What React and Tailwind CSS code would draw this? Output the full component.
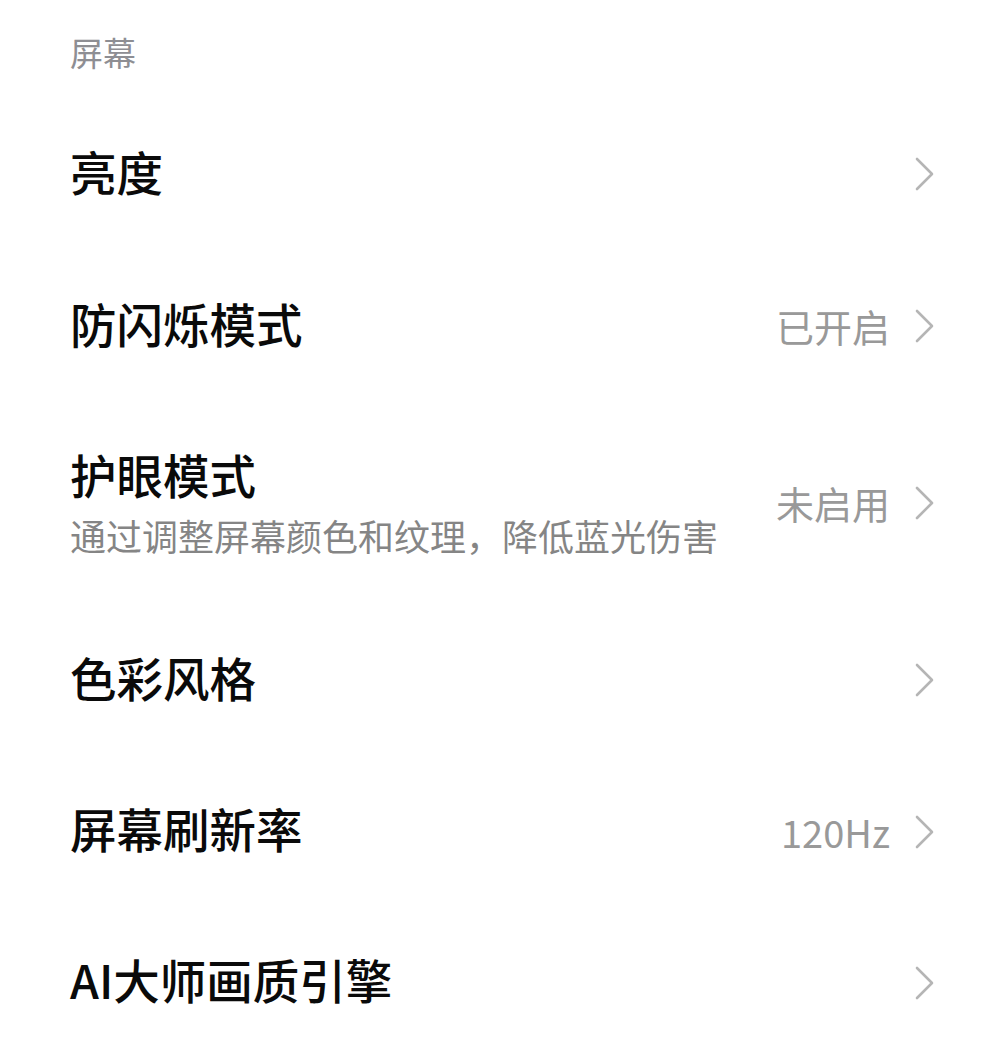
import React from "react";

const Chevron = () => (
  <svg width="20" height="34" viewBox="0 0 20 34" fill="none" className="shrink-0">
    <polyline points="2,2 17,17 2,32" stroke="#b5b5b5" strokeWidth="2.6" strokeLinecap="round" strokeLinejoin="round" />
  </svg>
);

const rows = [
  { title: "亮度", h: "h-[152px]" },
  { title: "防闪烁模式", value: "已开启", h: "h-[152px]" },
  { title: "护眼模式", sub: "通过调整屏幕颜色和纹理，降低蓝光伤害", value: "未启用", h: "h-[202px]" },
  { title: "色彩风格", h: "h-[152px]" },
  { title: "屏幕刷新率", value: "120Hz", h: "h-[151px]" },
  { title: "AI大师画质引擎", h: "h-[151px]" },
];

export default function App() {
  return (
    <div
      className="w-[1004px] h-[1049px] bg-white overflow-hidden"
      style={{ fontFamily: '"Noto Sans CJK SC", "Noto Sans", sans-serif' }}
    >
      <div className="h-[98px] flex items-center pl-[70px] pt-[6px]">
        <span className="text-[33px] leading-none text-[#8e8e93]">屏幕</span>
      </div>
      {rows.map((r) => (
        <div key={r.title} className={`${r.h} flex items-center pl-[70px] pr-[69px]`}>
          <div className={`flex-1 flex flex-col gap-[19px] ${r.sub ? "mb-[2px]" : "mb-[6px]"}`}>
            <span className="text-[46.5px] leading-none font-medium text-[#0a0a0a]">{r.title}</span>
            {r.sub && <span className="text-[36px] leading-none text-[#858585]">{r.sub}</span>}
          </div>
          {r.value && (
            <span className="text-[38px] leading-none text-[#999999] mr-[25px]">{r.value}</span>
          )}
          <Chevron />
        </div>
      ))}
    </div>
  );
}
